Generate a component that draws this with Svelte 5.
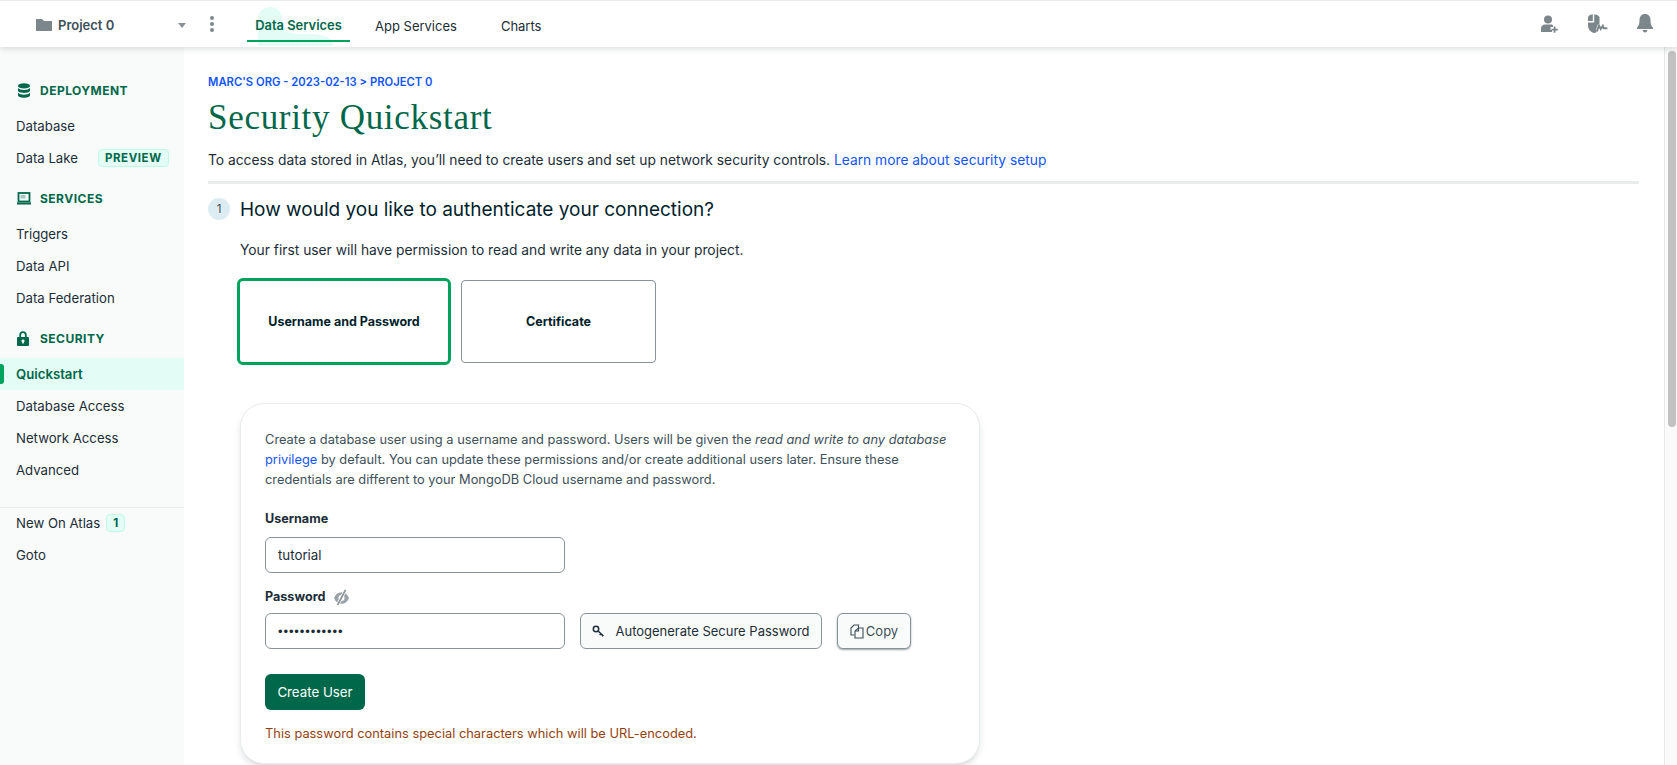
<script lang="ts">
  const groups = [
    { title: 'DEPLOYMENT', icon: 'db', items: [{ label: 'Database' }, { label: 'Data Lake', badge: 'PREVIEW' }] },
    { title: 'SERVICES', icon: 'screen', items: [{ label: 'Triggers' }, { label: 'Data API' }, { label: 'Data Federation' }] },
    {
      title: 'SECURITY',
      icon: 'lock',
      items: [{ label: 'Quickstart', active: true }, { label: 'Database Access' }, { label: 'Network Access' }, { label: 'Advanced' }],
    },
  ];
</script>

<div class="page">
  <header class="topbar">
    <div class="project">
      <svg class="folder" width="16" height="14" viewBox="0 0 16 14"><path d="M0 1h6l2 2h8v10H0z" fill="#7c878c" /></svg>
      <span class="project-name">Project 0</span>
      <span class="caret"></span>
    </div>
    <div class="dots"><i></i><i></i><i></i></div>
    <nav class="tabs">
      <a class="tab active" href="#a">
        <svg class="blob" width="75" height="39" viewBox="0 0 75 39"><path d="M0 39V12C0 5 5 0 12 0s12 5 12 12c0 9 5 14 14 15 12 0 37-2 37 12z" fill="#e3fcf5" /></svg>
        <span class="tab-label">Data Services</span>
      </a>
      <a class="tab apps" href="#a">App Services</a>
      <a class="tab charts" href="#a">Charts</a>
    </nav>
    <div class="top-icons">
      <svg width="18" height="18" viewBox="0 0 18 18" fill="#7c878c">
        <circle cx="7" cy="4.600" r="4" />
        <path d="M0 17v-3.500C0 11 2 9.500 4 9.500h6c1 0 1.600.4 2 .9V12H9.500v3H11v2z" />
        <path d="M12.700 11.500h1.800v2.200h2.300v1.800h-2.300v2.200h-1.800v-2.200h-2.300v-1.800h2.300z" />
      </svg>
      <svg width="20" height="19" viewBox="0 0 20 19" fill="#7c878c">
        <path d="M0 3.500C0 2 1.500.8 4.800.3V7H0z" />
        <path d="M6.200.2C9.500.6 11.500 2 11.500 3.500v6l-2 1.500-1.700 5.500.9 1.400C8 18.600 7 19 5.800 19 2.500 18 0 15 0 11.500v-3h6.200z" />
        <path d="M8.800 17.500l2.200-5.800 1.800 3.300 2-3.200 1 2.400h3.600" fill="none" stroke="#7c878c" stroke-width="2" />
      </svg>
      <svg width="16" height="19" viewBox="0 0 16 19" fill="#7c878c">
        <path d="M8 0c3.500 0 5.500 2.500 5.500 6.500 0 3 .7 5.300 2.500 7.300v1.200H0v-1.200c1.800-2 2.500-4.300 2.500-7.300C2.500 2.500 4.500 0 8 0z" />
        <path d="M5.500 16h5C10.300 17.600 9.300 18.500 8 18.500S5.700 17.600 5.500 16z" />
      </svg>
    </div>
  </header>

  <div class="body">
    <aside class="sidebar">
      {#each groups as g}
        <div class="group">
          <div class="group-title">
            <span class="group-icon">
              {#if g.icon === 'db'}
                <svg width="14" height="15" viewBox="0 0 14 15" fill="#00684a">
                  <ellipse cx="7" cy="2.900" rx="6" ry="2.600" />
                  <path d="M1 5c1 1.300 3.500 2 6 2s5-.7 6-2v2.600C13 9.100 10.300 10 7 10S1 9.100 1 7.600z" />
                  <path d="M1 9.800c1 1.300 3.500 2 6 2s5-.7 6-2v2.400c0 1.500-2.700 2.500-6 2.500s-6-1-6-2.500z" />
                </svg>
              {:else if g.icon === 'screen'}
                <svg width="14" height="13" viewBox="0 0 14 13" fill="none">
                  <rect x="1.500" y="1" width="11" height="8.500" stroke="#00684a" stroke-width="1.800" />
                  <rect x="0" y="10.500" width="14" height="2" fill="#00684a" />
                  <rect x="3.500" y="3" width="5" height="3.500" fill="#00684a" opacity=".35" />
                </svg>
              {:else}
                <svg width="12" height="15" viewBox="0 0 12 15" fill="#00684a">
                  <path fill-rule="evenodd" d="M2.300 6V4a3.700 3.700 0 0 1 7.400 0v2H11a1 1 0 0 1 1 1v7a1 1 0 0 1-1 1H1a1 1 0 0 1-1-1V7a1 1 0 0 1 1-1zm1.800 0h3.800V4a1.900 1.900 0 0 0-3.800 0zM6 8.500a1.500 1.500 0 0 0-.8 2.800v1.200h1.600v-1.200A1.500 1.500 0 0 0 6 8.500z" />
                </svg>
              {/if}
            </span>
            <span>{g.title}</span>
          </div>
          {#each g.items as item}
            <a class="side-item" class:active={item.active} href="#a">
              {item.label}
              {#if item.badge}<span class="badge preview">{item.badge}</span>{/if}
            </a>
          {/each}
        </div>
      {/each}
      <div class="side-rule"></div>
      <a class="side-item" href="#a">New On Atlas <span class="badge count">1</span></a>
      <a class="side-item" href="#a">Goto</a>
    </aside>

    <main class="main">
      <div class="crumbs">MARC'S ORG - 2023-02-13 &gt; PROJECT 0</div>
      <h1>Security Quickstart</h1>
      <p class="intro">To access data stored in Atlas, you’ll need to create users and set up network security controls. <a href="#a">Learn more about security setup</a></p>
      <div class="rule"></div>

      <div class="step">
        <span class="step-num">1</span>
        <h2>How would you like to authenticate your connection?</h2>
      </div>
      <p class="first-user">Your first user will have permission to read and write any data in your project.</p>

      <div class="choices">
        <button class="choice selected">Username and Password</button>
        <button class="choice cert">Certificate</button>
      </div>

      <section class="card">
        <p class="card-text">Create a database user using a username and password. Users will be given the <em>read and write to any database</em> <a href="#a">privilege</a> by default. You can update these permissions and/or create additional users later. Ensure these credentials are different to your MongoDB Cloud username and password.</p>

        <div class="label">Username</div>
        <div class="input">tutorial</div>

        <div class="label pw">
          Password
          <svg width="17" height="17" viewBox="0 0 17 17" fill="none">
            <path d="M1 9c1.300-3.600 4-5.800 7.500-5.800S14.700 5.400 16 9c-1.300 3.600-4 5.800-7.500 5.800S2.300 12.600 1 9z" fill="#9aa3a7" />
            <circle cx="8.500" cy="9" r="3" fill="#fff" />
            <path d="M4.500 16L12.500 1" stroke="#fff" stroke-width="3.200" />
            <path d="M4.500 16L12.500 1" stroke="#889397" stroke-width="1.600" />
          </svg>
        </div>
        <div class="pw-row">
          <div class="input dots-text">••••••••••••</div>
          <button class="btn auto">
            <svg width="13" height="13" viewBox="0 0 13 13" fill="none" stroke="#1c2d38" stroke-width="1.500">
              <circle cx="4" cy="4" r="2.700" />
              <path d="M6 6l5.500 5M9 8.600l-1.300 1.400M11 10l-1 1.200" />
            </svg>
            Autogenerate Secure Password
          </button>
          <button class="btn copy">
            <svg width="14" height="15" viewBox="0 0 14 15" fill="none" stroke="#3d4f58" stroke-width="1.100">
              <path d="M4.500 11H1V4l3-3h4.500v3" />
              <path d="M8.500 4H13v10H5V7z" />
              <path d="M8.500 4v3H5" />
            </svg>
            Copy
          </button>
        </div>

        <button class="create">Create User</button>
        <p class="warn">This password contains special characters which will be URL-encoded.</p>
      </section>
    </main>

    <div class="scroll"><div class="thumb"></div></div>
  </div>
</div>

<style>
  :global(body) {
    margin: 0;
    background: #fff;
    overflow: hidden;
  }

  .page {
    height: 765px;
    display: flex;
    flex-direction: column;
    font-family: Inter, 'Liberation Sans', sans-serif;
    color: #1c2d38;
    overflow: hidden;
  }

  a {
    text-decoration: none;
  }

  .topbar {
    position: relative;
    z-index: 5;
    height: 46px;
    flex: none;
    display: flex;
    align-items: center;
    border-top: 1px solid #e8edeb;
    box-shadow: 0 2px 6px rgba(0, 30, 43, 0.14);
    background: #fff;
    font-size: 13px;
  }

  .project {
    width: 210px;
    flex: none;
    display: flex;
    align-items: center;
    padding-left: 36px;
    padding-top: 2px;
    box-sizing: border-box;
  }

  .folder {
    margin-right: 6px;
  }

  .project-name {
    font-weight: 600;
    color: #3d4f58;
    font-size: 13px;
  }

  .caret {
    margin-left: auto;
    margin-right: 24px;
    border-left: 4px solid transparent;
    border-right: 4px solid transparent;
    border-top: 5px solid #889397;
  }

  .dots {
    display: flex;
    flex-direction: column;
    gap: 2px;
    margin-top: -1px;
  }

  .dots i {
    width: 4px;
    height: 4px;
    border-radius: 50%;
    background: #7c878c;
  }

  .tabs {
    display: flex;
    margin-left: 33px;
    height: 100%;
    align-items: center;
  }

  .tab {
    color: #1c2d38;
    font-size: 13px;
    padding-top: 4px;
  }

  .tab.active {
    position: relative;
    width: 103px;
    height: 40px;
    display: flex;
    align-items: center;
    justify-content: center;
    font-size: 12.900px;
    font-weight: 600;
    color: #00684a;
    box-sizing: border-box;
    margin-top: -5px;
    padding-top: 8px;
  }

  .tab.active::after {
    content: '';
    position: absolute;
    left: 0;
    right: 0;
    bottom: 0;
    height: 2px;
    background: #00a35c;
  }

  .blob {
    position: absolute;
    left: 11px;
    top: 5px;
  }

  .tab-label {
    position: relative;
  }

  .apps {
    margin-left: 25px;
  }

  .charts {
    margin-left: 44px;
  }

  .top-icons {
    margin-left: auto;
    display: flex;
    align-items: center;
    gap: 29px;
    padding-right: 24px;
    margin-top: -1px;
  }

  .body {
    flex: 1;
    min-height: 0;
    display: flex;
  }

  .sidebar {
    width: 184px;
    flex: none;
    background: #f9fbfa;
    padding-top: 27.500px;
    font-size: 13.200px;
  }

  .group {
    margin-bottom: 9px;
  }

  .group-title {
    display: flex;
    align-items: center;
    height: 32px;
    margin-bottom: 3px;
    padding-left: 17px;
    font-size: 12px;
    font-weight: 700;
    letter-spacing: 0.04em;
    color: #00684a;
  }

  .group-icon {
    width: 23px;
    display: flex;
  }

  .side-item {
    display: flex;
    align-items: center;
    height: 32px;
    padding-left: 16px;
    color: #1c2d38;
    position: relative;
  }

  .side-item.active {
    background: #e3fcf5;
    color: #00684a;
    font-weight: 600;
  }

  .side-item.active::before {
    content: '';
    position: absolute;
    left: 0;
    top: 6px;
    bottom: 6px;
    width: 4px;
    border-radius: 0 3px 3px 0;
    background: #00a35c;
  }

  .badge {
    border: 1px solid #c0fae6;
    background: #e3fcf5;
    color: #00684a;
    font-weight: 700;
    border-radius: 4px;
    font-size: 11.500px;
    line-height: 16px;
  }

  .preview {
    margin-left: 20px;
    padding: 0 6px;
    letter-spacing: 0.05em;
  }

  .count {
    margin-left: 6px;
    padding: 0 6px;
  }

  .side-rule {
    border-top: 1px solid #e8edeb;
    margin-top: 21px;
    margin-bottom: -1px;
  }

  .main {
    flex: 1;
    min-width: 0;
    padding: 27px 25px 0 24px;
    overflow: hidden;
  }

  .crumbs {
    font-size: 11.250px;
    font-weight: 600;
    color: #1254ff;
    line-height: 16px;
  }

  h1 {
    margin: 6px 0 0;
    font-family: 'Liberation Serif', serif;
    font-weight: 400;
    font-size: 35px;
    letter-spacing: 0.7px;
    line-height: 44px;
    color: #00684a;
  }

  .intro {
    margin: 10px 0 0;
    font-size: 13.800px;
    line-height: 20px;
  }

  .intro a,
  .card-text a {
    color: #1254ff;
  }

  .rule {
    height: 3px;
    background: #e8edeb;
    margin-top: 11px;
  }

  .step {
    display: flex;
    align-items: center;
    margin-top: 13px;
    height: 24px;
  }

  .step-num {
    width: 22px;
    height: 22px;
    border-radius: 50%;
    background: #ddecf2;
    font-size: 11.500px;
    display: flex;
    align-items: center;
    justify-content: center;
    color: #3d4f58;
    margin-right: 10px;
  }

  h2 {
    margin: 0;
    font-size: 19px;
    font-weight: 400;
    color: #001e2b;
  }

  .first-user {
    margin: 19px 0 0 32px;
    font-size: 13.800px;
    line-height: 20px;
  }

  .choices {
    display: flex;
    align-items: center;
    gap: 10px;
    margin: 18px 0 0 29px;
  }

  .choice {
    box-sizing: border-box;
    background: #fff;
    font-family: inherit;
    font-size: 12.500px;
    font-weight: 700;
    color: #001e2b;
    padding: 0;
  }

  .selected {
    width: 214px;
    height: 87px;
    border: 3px solid #00a35c;
    border-radius: 6px;
  }

  .cert {
    width: 195px;
    height: 83px;
    border: 1px solid #889397;
    border-radius: 4px;
  }

  .card {
    box-sizing: border-box;
    width: 740px;
    margin: 38px 0 0 32px;
    padding: 26px 24px 0;
    height: 361px;
    background: #fff;
    border: 1px solid #e8edeb;
    border-radius: 24px;
    box-shadow: 0 4px 10px -4px rgba(0, 30, 43, 0.3);
  }

  .card-text {
    margin: 0;
    font-size: 12.850px;
    line-height: 20px;
    color: #3d4f58;
  }

  .label {
    font-size: 12.600px;
    font-weight: 700;
    color: #1c2d38;
    line-height: 20px;
    margin-top: 19px;
    display: flex;
    align-items: center;
    gap: 8px;
  }

  .label.pw {
    margin-top: 14px;
  }

  .input {
    box-sizing: border-box;
    width: 300px;
    height: 36px;
    margin-top: 8px;
    border: 1px solid #889397;
    border-radius: 6px;
    padding-left: 12px;
    display: flex;
    align-items: center;
    font-size: 13.300px;
    color: #1c2d38;
  }

  .dots-text {
    margin-top: 6px;
    font-family: 'Liberation Sans', sans-serif;
    font-size: 13px;
    letter-spacing: 0.9px;
  }

  .pw-row {
    display: flex;
    align-items: flex-end;
    gap: 15px;
  }

  .btn {
    box-sizing: border-box;
    height: 36px;
    display: flex;
    align-items: center;
    border: 1px solid #889397;
    border-radius: 6px;
    background: #f9fbfa;
    font-family: inherit;
    font-size: 13px;
    color: #1c2d38;
    padding: 0;
  }

  .auto {
    width: 242px;
    justify-content: center;
    gap: 10px;
  }

  .copy {
    width: 74px;
    justify-content: center;
    gap: 2px;
    color: #3d4f58;
    box-shadow: 0 1px 2px rgba(0, 30, 43, 0.4);
  }

  .create {
    display: block;
    width: 100px;
    height: 36px;
    margin-top: 25px;
    padding: 0;
    border: 0;
    border-radius: 6px;
    background: #00684a;
    color: #fff;
    font-family: inherit;
    font-size: 13.300px;
  }

  .warn {
    margin: 14px 0 0;
    font-size: 12.850px;
    line-height: 20px;
    color: #943f0d;
  }

  .scroll {
    width: 13px;
    flex: none;
    background: #fafafa;
    border-left: 1px solid #e8e8e8;
    box-sizing: border-box;
    padding: 4px 0 0 3px;
  }

  .thumb {
    width: 8px;
    height: 376px;
    border-radius: 4px;
    background: #c1c1c1;
  }
</style>
